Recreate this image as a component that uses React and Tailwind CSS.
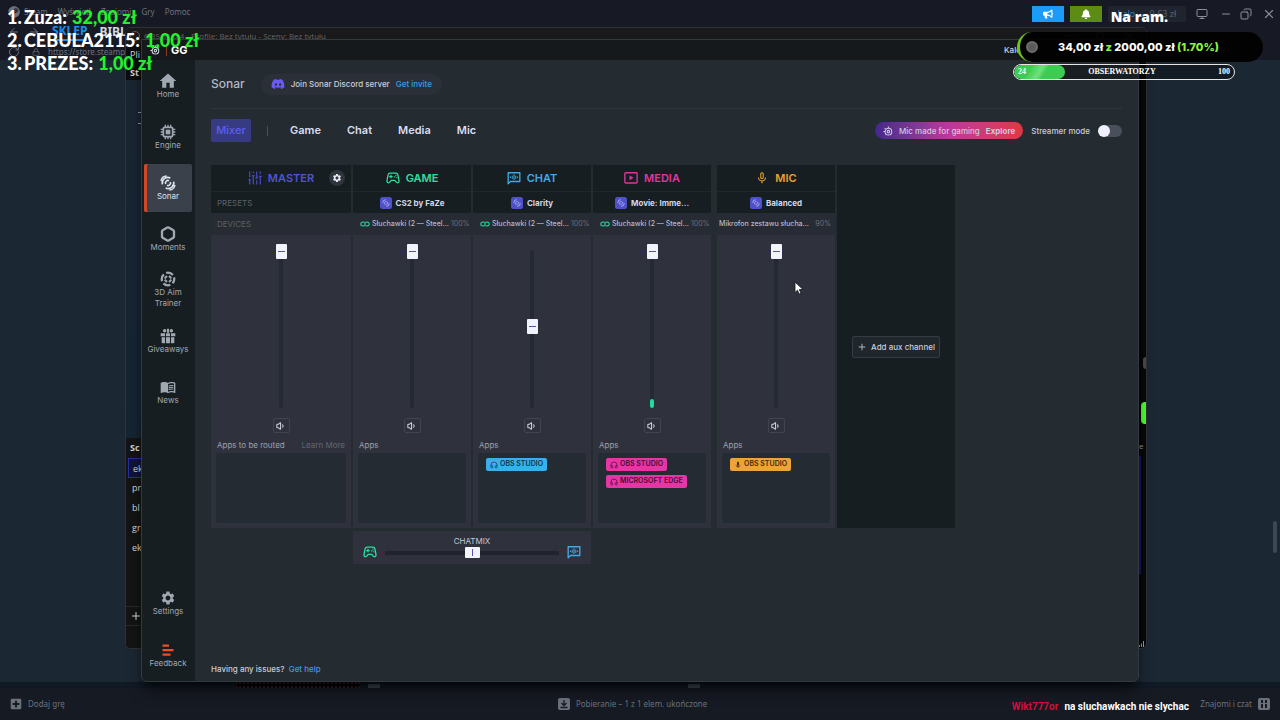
import React, { useState } from 'react';
import { Headphones, Volume1, Plus, Hexagon, ArrowLeft, ArrowRight, RotateCw, Minus, X, Square, Copy, Monitor, Lock } from 'lucide-react';
import { FaDiscord, FaSteam, FaBullhorn, FaBell, FaPlusSquare } from 'react-icons/fa';
import { MdHome, MdSettings, MdMenuBook, MdMicNone, MdMic } from 'react-icons/md';

/* ---------- icons ---------- */

function Icon({ children, className, viewBox = '0 0 24 24' }) {
  return (
    <svg className={className} viewBox={viewBox} fill="none" stroke="currentColor" strokeWidth="2" aria-hidden="true">
      {children}
    </svg>
  );
}

function CpuIcon({ className }) {
  return (
    <Icon className={className}>
      <rect x="5" y="5" width="14" height="14" rx="2" strokeWidth="2.6" />
      <rect x="8.500" y="8.500" width="7" height="7" fill="currentColor" stroke="none" />
      <path d="M8 1v4M12 1v4M16 1v4M8 19v4M12 19v4M16 19v4M1 8h4M1 12h4M1 16h4M19 8h4M19 12h4M19 16h4" strokeWidth="2" />
    </Icon>
  );
}

function SonarIcon({ className }) {
  return (
    <Icon className={className}>
      <path d="M1.500 9A9 9 0 0 1 10 1.500" strokeWidth="2.200" />
      <path d="M3.500 14A8.500 8.500 0 0 1 15.500 4.500" strokeWidth="2.400" />
      <path d="M8.500 13.500a3.800 3.800 0 0 1 5-5M15.500 10.500a3.800 3.800 0 0 1-5 5" strokeWidth="2.400" />
      <path d="M20.500 10A8.500 8.500 0 0 1 8.500 19.500" strokeWidth="2.400" />
      <path d="M22.500 15a9 9 0 0 1-8.500 7.500" strokeWidth="2.200" />
    </Icon>
  );
}

function AimIcon({ className }) {
  return (
    <Icon className={className}>
      <circle cx="12" cy="12" r="9.4" strokeWidth="3.4" strokeDasharray="11 3.76" strokeDashoffset="4" />
      <path d="M7 11l3.500-3.500M17 13l-3.500 3.500M13.500 7.500 17 11M7 13l3.500 3.500" strokeWidth="3" />
    </Icon>
  );
}

function GiftIcon({ className }) {
  return (
    <Icon className={className}>
      <g fill="currentColor" stroke="none">
        <path d="M1 8h6.500v4.500H1zM9 8h6v4.500H9zM16.500 8H23v4.500h-6.500zM2.500 14h5v9H4a1.500 1.500 0 0 1-1.500-1.500zM9 14h6v9H9zM16.500 14h5v7.500A1.500 1.500 0 0 1 20 23h-3.500z" />
        <circle cx="7" cy="4" r="2.600" />
        <circle cx="17" cy="4" r="2.600" />
        <path d="M10.500 1h3v6h-3z" />
      </g>
    </Icon>
  );
}

function FeedbackIcon({ className }) {
  return (
    <Icon className={className}>
      <path d="M1 3h13M1 12h22M1 21h16" strokeWidth="4.500" />
    </Icon>
  );
}

function FadersIcon({ className }) {
  return (
    <Icon className={className}>
      <path d="M3 1v10M3 15v8M9 1v3M9 8v15M15 1v11M15 16v7M21 1v4M21 9v14M0.500 15h5M6.500 8h5M12.500 12h5M18.500 9h5" strokeWidth="1.800" />
    </Icon>
  );
}

function GamepadIcon({ className }) {
  return (
    <Icon className={className}>
      <path d="M7 3.500h10c2 0 3 1 3.400 3l1.900 10c.6 3-2.300 5-4.300 3l-3-3.500H9l-3 3.500c-2 2-4.900 0-4.300-3l1.900-10C4 4.500 5 3.500 7 3.500z" strokeWidth="2.200" strokeLinejoin="round" />
      <path d="M8.500 6.500v6M5.500 9.500h6" />
      <path d="M17 6.300v2M15 9v2M18.500 10.500v2" strokeWidth="2.200" />
    </Icon>
  );
}

function ChatIcon({ className }) {
  return (
    <Icon className={className}>
      <path d="M2 22V3h20v15H6z" strokeWidth="2.300" strokeLinejoin="round" />
      <path d="M6 9.500v2.500M9 8v5.500M12 5.500v10M15 8v5.500M18 9.500v2.500" strokeWidth="1.700" />
    </Icon>
  );
}

function MediaIcon({ className }) {
  return (
    <Icon className={className}>
      <rect x="1.500" y="3" width="21" height="17.500" rx="1.500" strokeWidth="2.300" />
      <path d="M9.500 7.500v8.500l7-4.250z" fill="currentColor" stroke="none" />
    </Icon>
  );
}

function LinkIcon({ className }) {
  return (
    <Icon className={className} viewBox="0 0 24 14">
      <path d="M11 2.500H6.500a4.500 4.500 0 0 0 0 9H8a4 4 0 0 0 4-4.500 4 4 0 0 1 4-4.500h1.500a4.500 4.500 0 0 1 0 9H13" strokeWidth="3" />
    </Icon>
  );
}

function PresetIcon({ className }) {
  return (
    <Icon className={className}>
      <rect width="24" height="24" rx="5" fill="#4f51c9" stroke="none" />
      <path d="M5.500 11.500a6 6 0 0 1 6-6M9 14.500c-1-3 1-5.500 4-5.500M18.500 12.500a6 6 0 0 1-6 6M15 9.500c1 3-1 5.500-4 5.500" stroke="#a9acf2" />
    </Icon>
  );
}

function SteelIcon({ className }) {
  return (
    <Icon className={className}>
      <circle cx="13" cy="13.500" r="8" strokeWidth="2.500" />
      <circle cx="13" cy="13.500" r="3" strokeWidth="2.500" />
      <path d="M13 1v4M1 13h4M3.500 5l3 2" strokeWidth="2.500" />
    </Icon>
  );
}

/* ---------- data ---------- */

const SIDEBAR = [
  { label: 'Home', icon: MdHome, size: 'size-5' },
  { label: 'Engine', icon: CpuIcon, size: 'size-4' },
  { label: 'Sonar', icon: SonarIcon, size: 'size-4', active: true },
  { label: 'Moments', icon: Hexagon, size: 'size-4 stroke-[3.5px]' },
  { label: '3D Aim Trainer', icon: AimIcon, size: 'size-4' },
  { label: 'Giveaways', icon: GiftIcon, size: 'size-4' },
  { label: 'News', icon: MdMenuBook, size: 'size-4' },
];

const CHANNELS = [
  {
    name: 'MASTER', icon: FadersIcon, color: 'text-[#5152d6]', master: true, volume: 100, apps: [],
  },
  {
    name: 'GAME', icon: GamepadIcon, color: 'text-[#2ce0a0]', preset: 'CS2 by FaZe',
    device: 'Słuchawki (2 — Steel...', linked: true, level: '100%', volume: 100, apps: [],
  },
  {
    name: 'CHAT', icon: ChatIcon, color: 'text-[#3fa9ea]', preset: 'Clarity',
    device: 'Słuchawki (2 — Steel...', linked: true, level: '100%', volume: 50,
    apps: ['OBS STUDIO'], chip: 'bg-[#38b0ee] text-[#0d3550]',
  },
  {
    name: 'MEDIA', icon: MediaIcon, color: 'text-[#e0359f]', preset: 'Movie: Imme...',
    device: 'Słuchawki (2 — Steel...', linked: true, level: '100%', volume: 100, meter: true,
    apps: ['OBS STUDIO', 'MICROSOFT EDGE'], chip: 'bg-[#e436a5] text-[#4c0c36]',
  },
  {
    name: 'MIC', icon: MdMicNone, color: 'text-[#efa12e]', preset: 'Balanced',
    device: 'Mikrofon zestawu słucha...', level: '90%', volume: 100,
    apps: ['OBS STUDIO'], chip: 'bg-[#eda338] text-[#4a2c05]', mic: true,
  },
];

const DONORS = [
  ['1.', 'Zuza:', '32,00 zł'],
  ['2.', 'CEBULA2115:', '1,00 zł'],
  ['3.', 'PREZES:', '1,00 zł'],
];

/* ---------- steam client behind everything ---------- */

function SteamClient() {
  return (
    <div className="h-full flex flex-col bg-[#1b2733] font-['Noto_Sans',sans-serif] text-[#6c727d]">
      <header className="h-[60px] shrink-0 bg-[#171a25] flex justify-between">
        <div className="pl-2 pt-1">
          <nav className="h-4 flex items-center gap-2.5 text-[8px]">
            <FaSteam className="size-3 -mr-1.5" />
            <a href="#steam">Steam</a>
            <a href="#view">Wyświetl</a>
            <a href="#friends">Znajomi</a>
            <a href="#games">Gry</a>
            <a href="#help">Pomoc</a>
          </nav>
          <nav className="h-6 flex items-center gap-2 text-[12px] font-bold">
            <ArrowLeft className="size-3" />
            <ArrowRight className="size-3 mr-1" />
            <a href="#store" className="mr-1 text-[#1a8fe8] border-b-2 border-[#1a8fe8] leading-4">SKLEP</a>
            <a href="#library" className="text-[#d5d9df]">BIBL</a>
          </nav>
          <div className="h-4 flex items-center gap-2 text-[8px]">
            <RotateCw className="size-3" />
            <Lock className="size-2 ml-1" />
            <span>https://store.steampow</span>
          </div>
        </div>
        <div className="h-6 pr-1 pt-1 flex items-center gap-1.5 text-[#8b919c]">
          <button aria-label="News" className="w-8 h-4 bg-[#1d9bf8] text-white flex items-center justify-center"><FaBullhorn className="size-2.5" /></button>
          <button aria-label="Notifications" className="w-8 h-4 bg-[#5c8c14] text-white flex items-center justify-center"><FaBell className="size-2.5" /></button>
          <button className="w-[78px] h-4 bg-[#20242f] rounded-xs flex items-center justify-center gap-1 text-[9px]">
            <span className="text-[#2f7fb8]">kalo ⌄</span>
            <span className="text-[#5c636e]">0,63 zł</span>
          </button>
          <Monitor className="size-3 ml-1" />
          <Minus className="size-3 ml-1.5" />
          <Copy className="size-3 ml-0.5 -scale-x-100" />
          <X className="size-3.5 ml-1" />
        </div>
      </header>
      <main className="flex-1 flex items-end justify-end pr-[3px] pb-[129px]">
        <div className="w-1 h-8 rounded-full bg-[#3d4853]" />
      </main>
      <div className="h-1.5 flex bg-[#101924]">
        <div className="ml-[236px] w-[124px] border-y-2 border-dotted border-[#3d1820] bg-black" />
        <div className="ml-2 mt-0.5 h-1 w-3 bg-[#3b444e]" />
        <div className="ml-[308px] mt-0.5 h-1 w-3 bg-[#3b444e]" />
      </div>
      <footer className="h-8 shrink-0 px-2.5 bg-[#161a23] flex items-center justify-between text-[8px]">
        <a href="#add" className="flex items-center gap-1.5"><FaPlusSquare className="size-3" />Dodaj grę</a>
        <span className="flex items-center gap-1.5">
          <Icon className="size-3" viewBox="0 0 12 12">
            <rect width="12" height="12" rx="2" fill="#6c727d" stroke="none" />
            <path d="M6 2v5M3.500 5 6 7.500 8.500 5M2.500 9.500h7" stroke="#161a23" strokeWidth="1.300" />
          </Icon>
          Pobieranie – 1 z 1 elem. ukończone
        </span>
        <a href="#chat" className="flex items-center gap-1.5">
          Znajomi i czat
          <Icon className="size-3" viewBox="0 0 12 12">
            <rect width="12" height="12" rx="2" fill="#6c727d" stroke="none" />
            <path d="M4 2v3M8 2v3M4 6v4M8 6v4" stroke="#161a23" strokeWidth="2" />
          </Icon>
        </a>
      </footer>
    </div>
  );
}

/* ---------- obs window, mostly covered ---------- */

function ObsWindow() {
  return (
    <div className="absolute left-[125px] right-[133px] top-[27px] bottom-[71px] rounded-md border border-[#2f3338] bg-[#070809] overflow-hidden flex flex-col font-['Open_Sans',sans-serif]">
      <div className="h-4 shrink-0 bg-[#1a191b] px-1 flex items-center justify-between text-[8px] text-[#66666a]">
        <span className="flex items-center gap-1"><span className="size-2.5 rounded-full border border-[#5b5b5e]" />OBS 31.0.4 - Profile: Bez tytułu - Sceny: Bez tytułu</span>
        <span className="flex items-center gap-5 pr-2 text-[#55585c]">
          <Minus className="size-2.5" /><Square className="size-2" /><X className="size-2.5" />
        </span>
      </div>
      <div className="flex-1 flex justify-between">
        <div className="w-4 flex flex-col text-[9px] text-[#d8d8d8] overflow-hidden whitespace-nowrap">
          <div className="h-[36px] pl-1 pt-0.5 bg-[#0d0d0d] leading-[18px]">
            Pli
            <br />
            <b>St</b>
          </div>
          <div className="flex-1 bg-linear-to-b from-[#1a2632] to-[#142532] flex flex-col items-end">
            <div className="mt-8 w-1 h-3 border-y border-[#8b949e]" />
            <div className="mt-16 w-px h-12 bg-[#39434d]" />
            <div className="mt-10 w-px h-12 bg-[#39434d]" />
          </div>
          <div className="h-[210px] bg-[#141414] flex flex-col">
            <b className="h-5 pl-1 leading-5">Sc</b>
            <span className="h-5 ml-0.5 pl-1 leading-5 bg-[#10143c] border border-[#26309a]">ek</span>
            <span className="h-5 pl-1.5 leading-5">pr</span>
            <span className="h-5 pl-1.5 leading-5">bl</span>
            <span className="h-5 pl-1.5 leading-5">gr</span>
            <span className="h-5 pl-1.5 leading-5">ek</span>
            <span className="mt-12 h-5 pl-1 border-y border-[#2a2a2a] flex items-center"><Plus className="size-3 shrink-0" /></span>
          </div>
        </div>
        <div className="w-[7px] flex flex-col items-end text-[8px] text-[#9b9b9b]">
          <div className="mt-[313px] w-[3px] h-3 rounded-l-full bg-[#4b4b4b]" />
          <div className="mt-[33px] w-[5px] h-[22px] rounded-l-sm bg-[#4dff2e]" />
          <div className="mt-4 w-full leading-3">e</div>
          <div className="mt-1 mr-auto w-[2px] h-[118px] bg-[#191660]" />
          <Icon className="mt-auto mb-px mr-auto size-1.5 text-[#9b9b9b]" viewBox="0 0 6 6">
            <path d="M0.500 6V4M2.500 6V2.500M4.500 6V0" strokeWidth="1" />
          </Icon>
        </div>
      </div>
    </div>
  );
}

/* ---------- steelseries gg ---------- */

function SidebarItem({ label, icon: Glyph, size, active, glyphColor = '' }) {
  return (
    <button
      className={
        'h-12 w-12 flex flex-col items-center justify-center rounded-xs text-[8px] leading-[11px] ' +
        (active ? 'bg-[#3b414b] shadow-[inset_3px_0_#d0472a] text-[#dfe3ee]' : 'text-[#a0a8b2]')
      }
    >
      <span className={'h-4 flex items-center ' + glyphColor}><Glyph className={size + ' shrink-0'} /></span>
      <span className="text-center">{label}</span>
    </button>
  );
}

function Sidebar() {
  return (
    <nav className="w-[53px] shrink-0 bg-[#171e21] pt-0.5 pb-0.5 pl-0.5 flex flex-col gap-[3px]">
      {SIDEBAR.map((item) => (
        <SidebarItem key={item.label} {...item} />
      ))}
      <div className="mt-auto flex flex-col gap-1">
        <SidebarItem label="Settings" icon={MdSettings} size="size-4" />
        <SidebarItem label="Feedback" icon={FeedbackIcon} size="size-3" glyphColor="text-[#e8502a]" />
      </div>
    </nav>
  );
}

function Channel({ channel }) {
  const { name, icon: Glyph, color, master, preset, device, linked, level, meter, apps, chip, mic } = channel;
  const [volume, setVolume] = useState(channel.volume);
  const ChipIcon = mic ? MdMic : Headphones;

  return (
    <section className={'flex flex-col ' + (mic ? 'ml-1' : '')}>
      <div className="relative h-[27px] bg-[#171e21] border-b border-[#1f272b] flex items-center justify-center gap-1.5">
        <Glyph className={'size-3.5 ' + color} />
        <h2 className={'text-[11px] font-semibold ' + color}>{name}</h2>
        {master && (
          <button aria-label="Master settings" className="absolute right-1.5 size-4 rounded-full bg-[#2f343c] text-[#e8eaf2] flex items-center justify-center">
            <MdSettings className="size-2.5" />
          </button>
        )}
      </div>

      <div className="h-[21px] bg-[#171e21] flex items-center justify-center">
        {master ? (
          <span className="w-full pl-1.5 text-[8px] text-[#5a6167]">PRESETS</span>
        ) : (
          <button className="flex items-center gap-1 text-[8px] font-bold text-[#d3d7e6]">
            <PresetIcon className="size-3" />
            {preset}
          </button>
        )}
      </div>

      <div className="h-[22px] bg-[#262b34] flex items-center">
        {master ? (
          <span className="pl-1.5 text-[8px] text-[#5a6167]">DEVICES</span>
        ) : (
          <button className={'w-full pr-1 flex items-center gap-0.5 text-[7px] text-[#b4bac9] font-medium ' + (mic ? 'pl-0.5' : 'pl-[7px]')}>
            {linked && <LinkIcon className="w-2.5 h-2 shrink-0 text-[#22c48e]" />}
            <span className="flex-1 whitespace-nowrap text-left">{device}</span>
            <span className="font-normal text-[#6b717c]">{level}</span>
          </button>
        )}
      </div>

      <div className="h-[293px] bg-[#2f323d] px-[5px] pt-[9px] pb-[5px] flex flex-col items-center">
        <div className="relative h-[164px] w-3 flex justify-center">
          <div className="absolute top-1.5 bottom-0 w-1 rounded-full bg-[#232a31]" />
          {meter && <div className="absolute bottom-0 w-1 h-[9px] rounded-xs bg-[#21dba0]" />}
          <input
            type="range"
            aria-label={name + ' volume'}
            value={volume}
            onChange={(e) => setVolume(Number(e.target.value))}
            className="relative h-full w-[11px] appearance-none bg-transparent [writing-mode:vertical-lr] [direction:rtl] [&::-webkit-slider-thumb]:appearance-none [&::-webkit-slider-thumb]:h-[15px] [&::-webkit-slider-thumb]:w-[11px] [&::-webkit-slider-thumb]:rounded-[1px] [&::-webkit-slider-thumb]:bg-[#f2f4fd] [&::-webkit-slider-thumb]:bg-[linear-gradient(#5153b8,#5153b8)] [&::-webkit-slider-thumb]:bg-[length:7px_1px] [&::-webkit-slider-thumb]:bg-center [&::-webkit-slider-thumb]:bg-no-repeat"
          />
        </div>
        <button aria-label={'Mute ' + name} className="mt-2.5 w-[17px] h-[15px] rounded-xs border border-[#414551] text-[#cfd3e2] flex items-center justify-center">
          <Volume1 className="size-2.5" strokeWidth={2.5} />
        </button>
        <div className="mt-1 h-4 w-full px-px flex items-center justify-between text-[8px] text-[#9ba1ae]">
          <span>{master ? 'Apps to be routed' : 'Apps'}</span>
          {master && <a href="#learn" className="text-[#60666f]">Learn More</a>}
        </div>
        <div className="flex-1 w-full bg-[#252b32] rounded-xs pl-2 pt-[5px] flex flex-col items-start gap-1">
          {apps.map((app) => (
            <button key={app} className={'h-[13px] px-1 rounded-xs flex items-center gap-0.5 text-[7px] font-semibold ' + chip}>
              <ChipIcon className="size-2" />
              {app}
            </button>
          ))}
        </div>
      </div>
    </section>
  );
}

function ChatMix() {
  const [mix, setMix] = useState(50);
  return (
    <div className="col-start-2 col-span-2 h-[33px] bg-[#2f323d] px-2.5 flex items-end gap-2 pb-[5px]">
      <GamepadIcon className="size-3.5 text-[#2ce0a0]" />
      <label className="flex-1 flex flex-col items-center text-[8px] leading-3 text-[#c3c8d6]">
        CHATMIX
        <input
          type="range"
          value={mix}
          onChange={(e) => setMix(Number(e.target.value))}
          className="w-full h-3 appearance-none bg-transparent [&::-webkit-slider-runnable-track]:h-1 [&::-webkit-slider-runnable-track]:bg-[#20232c] [&::-webkit-slider-thumb]:appearance-none [&::-webkit-slider-thumb]:-mt-1 [&::-webkit-slider-thumb]:h-[11px] [&::-webkit-slider-thumb]:w-[15px] [&::-webkit-slider-thumb]:rounded-[1px] [&::-webkit-slider-thumb]:bg-[#f2f4fd] [&::-webkit-slider-thumb]:bg-[linear-gradient(#5153b8,#5153b8)] [&::-webkit-slider-thumb]:bg-[length:1px_7px] [&::-webkit-slider-thumb]:bg-center [&::-webkit-slider-thumb]:bg-no-repeat"
        />
      </label>
      <ChatIcon className="size-3.5 text-[#3fa9ea]" />
    </div>
  );
}

function SonarPage() {
  const [streamer, setStreamer] = useState(false);
  return (
    <div className="flex-1 px-4 flex flex-col">
      <header className="h-[49px] flex items-center gap-4 border-b border-[#30373e]">
        <h1 className="text-[12px] font-medium text-[#b3b8c4]">Sonar</h1>
        <p className="h-[21px] px-2.5 rounded-full bg-[#2b3038] flex items-center gap-1.5 text-[8px] font-medium text-[#c9cddb]">
          <FaDiscord className="size-3.5 text-[#6a5cf0]" />
          Join Sonar Discord server
          <a href="#invite" className="text-[#3a9de0]">Get invite</a>
        </p>
      </header>

      <div className="mt-2.5 h-[23px] flex items-center justify-between">
        <nav className="flex items-center gap-[26px] text-[11px] font-semibold text-[#dadef0]">
          <button className="h-[23px] w-10 rounded-xs bg-[#373b82] text-[#5c5ff0] font-medium">Mixer</button>
          <span className="-ml-2.5 -mr-1 w-px h-2.5 bg-[#4a5058]" />
          <button>Game</button>
          <button>Chat</button>
          <button>Media</button>
          <button>Mic</button>
        </nav>
        <div className="flex items-center gap-2 text-[8px] font-medium text-[#c9cddb]">
          <button className="h-[17px] px-2 rounded-full bg-linear-to-r from-[#45268f] via-[#b9399d] to-[#e2363f] flex items-center gap-1.5">
            <SteelIcon className="size-2.5" />
            Mic made for gaming
            <b>Explore</b>
          </button>
          <label className="flex items-center gap-2">
            Streamer mode
            <input
              type="checkbox"
              role="switch"
              checked={streamer}
              onChange={(e) => setStreamer(e.target.checked)}
              className="appearance-none w-6 h-3 rounded-full bg-[#4a4f5c] before:block before:size-3 before:rounded-full before:bg-[#eef0fb] checked:before:ml-3"
            />
          </label>
        </div>
      </div>

      <div className="mt-[23px] grid grid-cols-[140px_118px_118px_118px_122px_118px] gap-x-0.5 gap-y-[3px]">
        {CHANNELS.map((channel) => (
          <Channel key={channel.name} channel={channel} />
        ))}
        <div className="bg-[#171e21] flex items-center justify-center">
          <button className="h-[22px] px-1 rounded-xs border border-[#353c43] bg-[#20272c] flex items-center gap-1 text-[8px] font-medium text-[#c9cddb]">
            <Plus className="size-2.5" />
            Add aux channel
          </button>
        </div>
        <ChatMix />
      </div>

      <footer className="mt-auto mb-1.5 text-[8px] leading-3 font-medium text-[#c9cddb]">
        Having any issues? <a href="#help" className="ml-0.5 text-[#3a9de0]">Get help</a>
      </footer>
    </div>
  );
}

function GgWindow() {
  return (
    <div className="absolute left-[141px] right-[141px] top-[39px] bottom-[38px] rounded-b-md border border-[#323a40] bg-[#242b31] overflow-hidden shadow-lg shadow-black/60 flex flex-col font-[Inter,sans-serif]">
      <div className="h-5 shrink-0 bg-[#15191c] pl-2 pr-[117px] flex items-center justify-between text-[8px] font-medium text-[#d3d7e0]">
        <span className="flex items-center gap-2">
          <SteelIcon className="size-2.5" />
          <span className="w-px h-3 -ml-0.5 bg-[#8a3a22]" />
          <b className="text-[11px] text-white -ml-1">GG</b>
        </span>
        <span>Kalo</span>
      </div>
      <div className="flex-1 flex">
        <Sidebar />
        <SonarPage />
      </div>
    </div>
  );
}

/* ---------- stream overlays ---------- */

function StreamOverlays() {
  return (
    <>
      <ol className="absolute left-[7px] top-[6px] font-[Lato,sans-serif] font-black text-[18px] leading-[23px] text-white">
        {DONORS.map(([place, who, amount]) => (
          <li key={place} className="flex">
            <span className="w-[17px]">{place}</span>
            <span>{who}</span>
            <span className="ml-[5px] text-[#22f22c]">{amount}</span>
          </li>
        ))}
      </ol>

      <p className="absolute right-[112px] top-[7px] font-['Open_Sans',sans-serif] font-extrabold text-[14px] leading-5 text-white">Na ram.</p>

      <div className="absolute right-[17px] top-[32px] w-[246px] h-[30px] rounded-full bg-black/90 border-l-3 border-[#6fc41d] pl-1.5 flex items-center font-[Inter,sans-serif] font-extrabold text-[11px] text-white">
        <span className="size-3 rounded-full bg-[#5b5b5b] border-2 border-[#6d6d6d]" />
        <span className="ml-5 whitespace-pre">34,00 zł <span className="text-[#8cf53a]">z</span> 2000,00 zł <span className="text-[#8cf53a]">(1.70%)</span></span>
      </div>

      <div className="absolute right-[45px] top-[64px] w-[222px] h-4 rounded-full border border-[#e6e6e6] bg-black/30 overflow-hidden font-['Liberation_Serif',serif] font-bold text-[8px] leading-[14px] text-white">
        <div className="absolute inset-y-0 left-0 w-[51px] rounded-full bg-linear-120 from-[#3ccc52] from-30% via-[#6ee07c] via-50% to-[#3ccc52] to-60%" />
        <div className="relative px-1 flex justify-between">
          <span>24</span>
          <span>OBSERWATORZY</span>
          <span>100</span>
        </div>
      </div>

      <p className="absolute right-[91px] bottom-[5px] font-[Roboto,sans-serif] font-bold text-[10px] leading-4 text-white flex gap-1.5">
        <span className="text-[#d0103c]">Wikt777or</span>
        na sluchawkach nie slychac
      </p>

      <svg className="absolute left-[794px] top-[281px] w-2.5 h-3.5" viewBox="0 0 10 14" aria-hidden="true">
        <path d="M1 1v10.500l2.500-2.300L5.200 13l1.800-.8-1.700-3.700H9z" fill="#fff" stroke="#14161a" strokeWidth="0.800" />
      </svg>
    </>
  );
}

export default function App() {
  return (
    <div className="relative h-screen overflow-hidden">
      <SteamClient />
      <ObsWindow />
      <GgWindow />
      <StreamOverlays />
    </div>
  );
}
